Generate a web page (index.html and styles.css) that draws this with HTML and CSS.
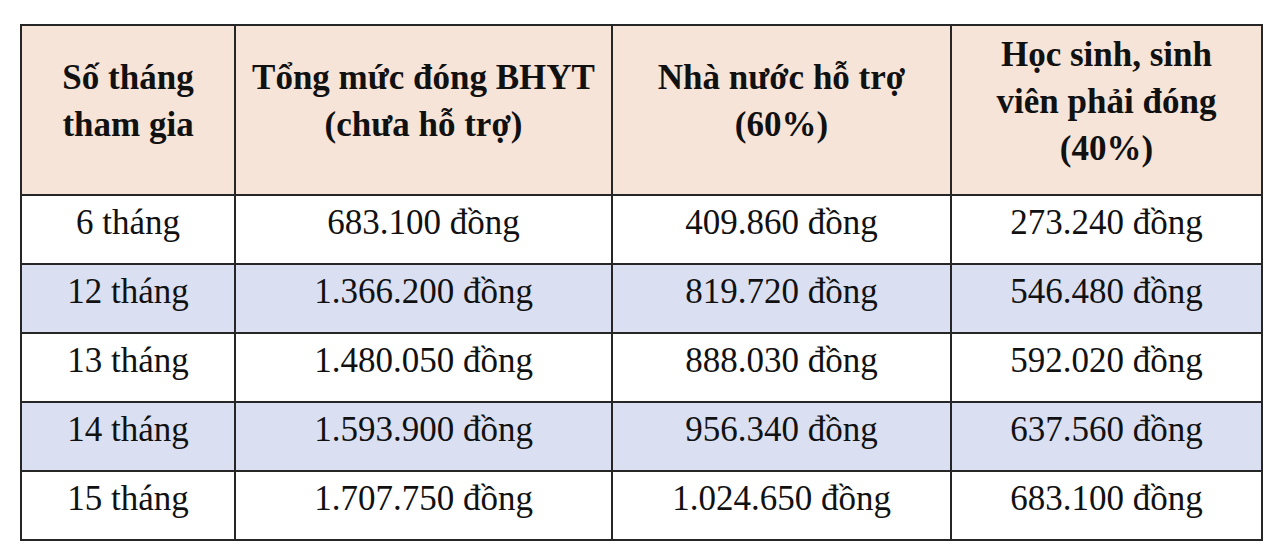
FILE: index.html
```html
<!DOCTYPE html>
<html lang="vi">
<head>
<meta charset="utf-8">
<link rel="stylesheet" href="styles.css">
</head>
<body>
<table class="fees">
  <colgroup>
    <col class="c1"><col class="c2"><col class="c3"><col class="c4">
  </colgroup>
  <thead>
    <tr class="head">
      <th>Số tháng<br>tham gia</th>
      <th>Tổng mức đóng BHYT<br>(chưa hỗ trợ)</th>
      <th>Nhà nước hỗ trợ<br>(60%)</th>
      <th>Học sinh, sinh<br>viên phải đóng<br>(40%)</th>
    </tr>
  </thead>
  <tbody>
    <tr><td>6 tháng</td><td>683.100 đồng</td><td>409.860 đồng</td><td>273.240 đồng</td></tr>
    <tr class="alt"><td>12 tháng</td><td>1.366.200 đồng</td><td>819.720 đồng</td><td>546.480 đồng</td></tr>
    <tr><td>13 tháng</td><td>1.480.050 đồng</td><td>888.030 đồng</td><td>592.020 đồng</td></tr>
    <tr class="alt"><td>14 tháng</td><td>1.593.900 đồng</td><td>956.340 đồng</td><td>637.560 đồng</td></tr>
    <tr><td>15 tháng</td><td>1.707.750 đồng</td><td>1.024.650 đồng</td><td>683.100 đồng</td></tr>
  </tbody>
</table>
</body>
</html>
```

FILE: styles.css
```css
html, body {
  margin: 0;
  padding: 0;
  background: #ffffff;
}
body {
  font-family: "Liberation Serif", "Times New Roman", serif;
  color: #111111;
}
.fees {
  border-collapse: collapse;
  table-layout: fixed;
  width: 1241px;
  margin: 24px 0 0 20px;
}
.c1 { width: 214px; }
.c2 { width: 377px; }
.c3 { width: 339px; }
.c4 { width: 311px; }
.fees th,
.fees td {
  border: 2px solid #262626;
  text-align: center;
  vertical-align: middle;
  padding: 0;
  font-size: 35px;
}
.head th {
  background: #f6e4d8;
  font-weight: bold;
  line-height: 47px;
  height: 170px;
  padding-bottom: 18px;
  box-sizing: border-box;
}
.fees td {
  height: 69px;
  line-height: 40px;
  font-weight: normal;
  padding-bottom: 14px;
  box-sizing: border-box;
}
.alt td {
  background: #dae0f1;
}
```
